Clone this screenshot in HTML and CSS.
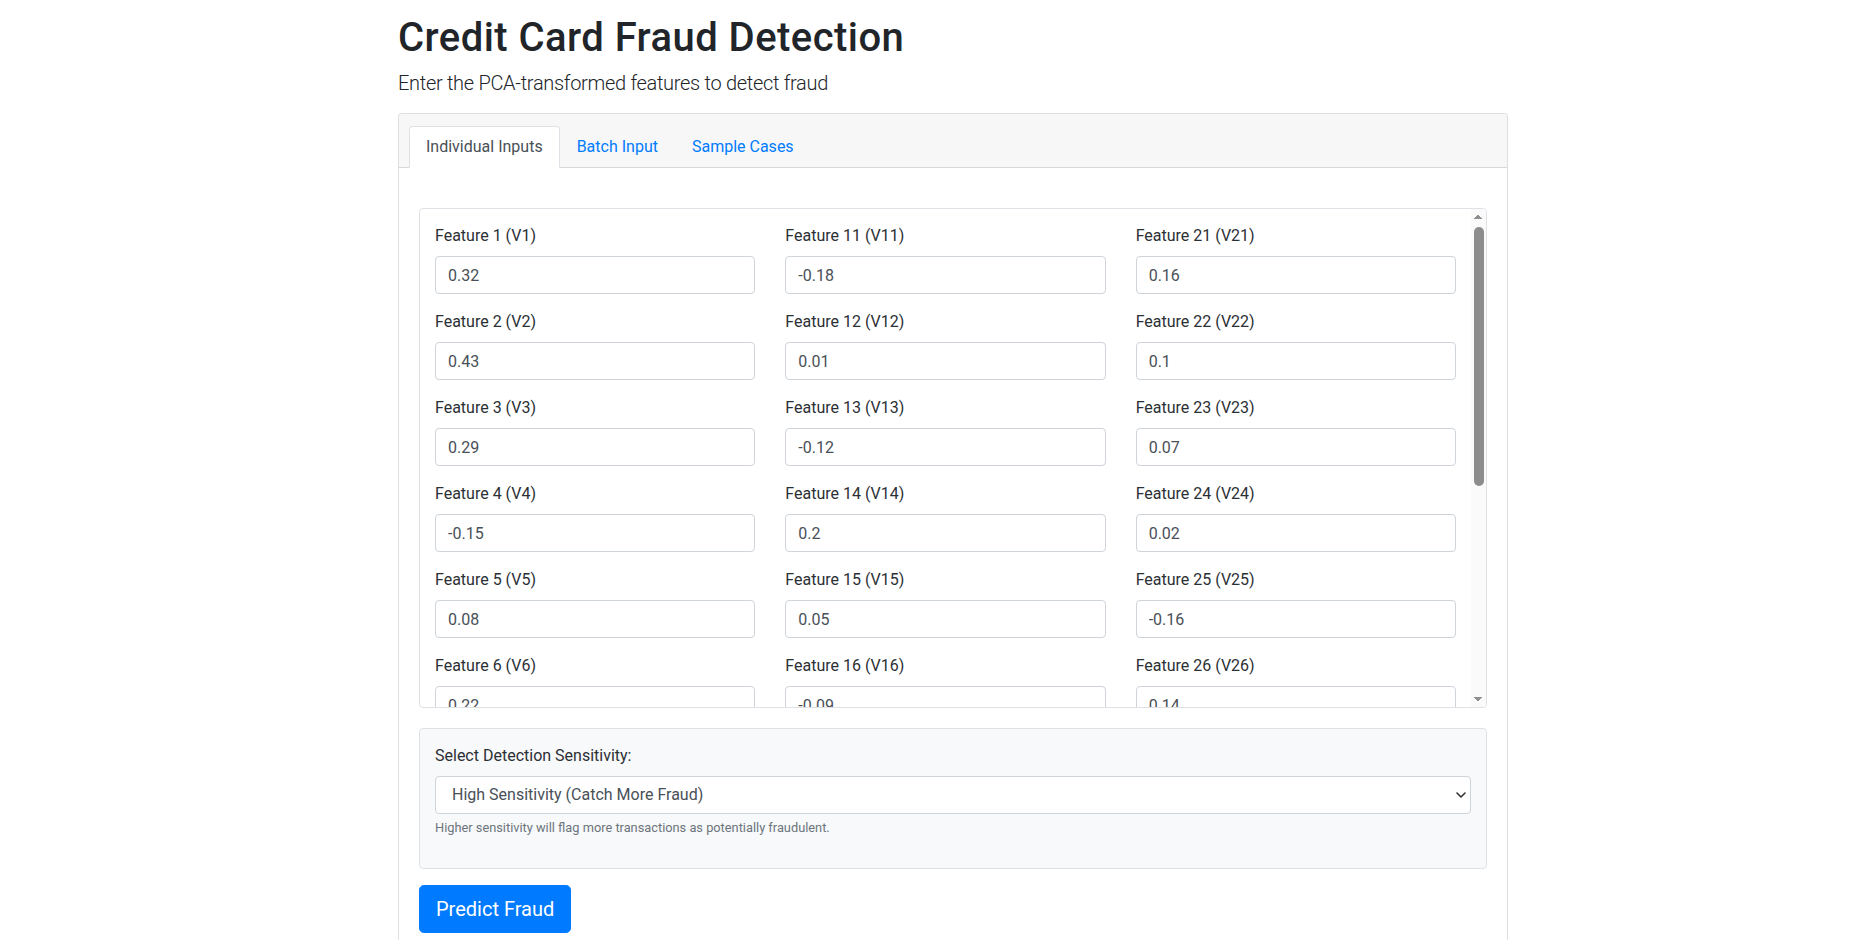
FILE: index.html
```html
<!DOCTYPE html>
<html lang="en">
<head>
<meta charset="utf-8">
<title>Credit Card Fraud Detection</title>
<link rel="stylesheet" href="styles.css">
</head>
<body>
<div class="page">
  <h1 class="title">Credit Card Fraud Detection</h1>
  <p class="lead">Enter the PCA-transformed features to detect fraud</p>

  <div class="card">
    <div class="card-header">
      <ul class="tabs">
        <li class="tab active">Individual Inputs</li>
        <li class="tab">Batch Input</li>
        <li class="tab">Sample Cases</li>
      </ul>
    </div>
    <div class="card-body">
      <div class="features-wrap">
        <div class="features">
          <div class="feature-cols">
            <div class="feature-col">
              <div class="field"><label>Feature 1 (V1)</label><input class="input" type="text" value="0.32"></div>
              <div class="field"><label>Feature 2 (V2)</label><input class="input" type="text" value="0.43"></div>
              <div class="field"><label>Feature 3 (V3)</label><input class="input" type="text" value="0.29"></div>
              <div class="field"><label>Feature 4 (V4)</label><input class="input" type="text" value="-0.15"></div>
              <div class="field"><label>Feature 5 (V5)</label><input class="input" type="text" value="0.08"></div>
              <div class="field"><label>Feature 6 (V6)</label><input class="input" type="text" value="0.22"></div>
              <div class="field"><label>Feature 7 (V7)</label><input class="input" type="text" value="0.11"></div>
              <div class="field"><label>Feature 8 (V8)</label><input class="input" type="text" value="-0.05"></div>
              <div class="field"><label>Feature 9 (V9)</label><input class="input" type="text" value="0.13"></div>
              <div class="field"><label>Feature 10 (V10)</label><input class="input" type="text" value="-0.07"></div>
            </div>
            <div class="feature-col">
              <div class="field"><label>Feature 11 (V11)</label><input class="input" type="text" value="-0.18"></div>
              <div class="field"><label>Feature 12 (V12)</label><input class="input" type="text" value="0.01"></div>
              <div class="field"><label>Feature 13 (V13)</label><input class="input" type="text" value="-0.12"></div>
              <div class="field"><label>Feature 14 (V14)</label><input class="input" type="text" value="0.2"></div>
              <div class="field"><label>Feature 15 (V15)</label><input class="input" type="text" value="0.05"></div>
              <div class="field"><label>Feature 16 (V16)</label><input class="input" type="text" value="-0.09"></div>
              <div class="field"><label>Feature 17 (V17)</label><input class="input" type="text" value="0.03"></div>
              <div class="field"><label>Feature 18 (V18)</label><input class="input" type="text" value="-0.11"></div>
              <div class="field"><label>Feature 19 (V19)</label><input class="input" type="text" value="0.06"></div>
              <div class="field"><label>Feature 20 (V20)</label><input class="input" type="text" value="0.04"></div>
            </div>
            <div class="feature-col">
              <div class="field"><label>Feature 21 (V21)</label><input class="input" type="text" value="0.16"></div>
              <div class="field"><label>Feature 22 (V22)</label><input class="input" type="text" value="0.1"></div>
              <div class="field"><label>Feature 23 (V23)</label><input class="input" type="text" value="0.07"></div>
              <div class="field"><label>Feature 24 (V24)</label><input class="input" type="text" value="0.02"></div>
              <div class="field"><label>Feature 25 (V25)</label><input class="input" type="text" value="-0.16"></div>
              <div class="field"><label>Feature 26 (V26)</label><input class="input" type="text" value="0.14"></div>
              <div class="field"><label>Feature 27 (V27)</label><input class="input" type="text" value="-0.03"></div>
              <div class="field"><label>Feature 28 (V28)</label><input class="input" type="text" value="0.01"></div>
            </div>
          </div>
        </div>
        <div class="fake-scrollbar" aria-hidden="true">
          <span class="sb-arrow sb-up"></span>
          <span class="sb-track"><span class="sb-thumb"></span></span>
          <span class="sb-arrow sb-down"></span>
        </div>
      </div>

      <div class="sensitivity">
        <label class="sens-label">Select Detection Sensitivity:</label>
        <div class="select-wrap">
          <select class="select">
            <option>High Sensitivity (Catch More Fraud)</option>
            <option>Balanced</option>
            <option>Low Sensitivity (Fewer False Alarms)</option>
          </select>
          <svg class="chevron" width="10" height="6" viewBox="0 0 10 6"><path d="M1 1 L5 5 L9 1" fill="none" stroke="#333" stroke-width="1.6" stroke-linecap="round" stroke-linejoin="round"/></svg>
        </div>
        <small class="hint">Higher sensitivity will flag more transactions as potentially fraudulent.</small>
      </div>

      <button class="btn-primary" type="button">Predict Fraud</button>
    </div>
  </div>
</div>
</body>
</html>
```

FILE: styles.css
```css
* { box-sizing: border-box; }

html, body {
  margin: 0;
  padding: 0;
  background: #fff;
}

body {
  font-family: Roboto, "Liberation Sans", Arial, sans-serif;
  font-size: 16px;
  line-height: 1.5;
  color: #212529;
  overflow: hidden;
}

.page {
  width: 1110px;
  margin: 0 0 0 398px;
  padding-top: 14px;
}

.title {
  margin: 0 0 6px;
  font-size: 40px;
  font-weight: 500;
  line-height: 1.2;
  letter-spacing: 0.45px;
  color: #212529;
}

.lead {
  margin: 0 0 15px;
  font-size: 20px;
  font-weight: 300;
  line-height: 1.5;
  letter-spacing: -0.3px;
  color: #212529;
}

.card {
  border: 1px solid rgba(0,0,0,.125);
  border-radius: 4px;
  background: #fff;
}

.card-header {
  background: #f7f7f7;
  border-bottom: 1px solid rgba(0,0,0,.125);
  padding: 12px 10px 0;
  border-radius: 3px 3px 0 0;
}

.tabs {
  display: flex;
  list-style: none;
  margin: 0 0 -1px;
  padding: 0;
}

.tab {
  padding: 8px 16px;
  border: 1px solid transparent;
  border-radius: 4px 4px 0 0;
  color: #007bff;
  line-height: 24px;
}

.tab.active {
  background: #fff;
  color: #495057;
  border-color: #dee2e6 #dee2e6 #fff;
}

.card-body {
  padding: 40px 20px 20px;
}

.features-wrap {
  position: relative;
}

.features {
  height: 500px;
  overflow-y: auto;
  scrollbar-width: none;
  border: 1px solid #dee2e6;
  border-radius: 4px;
  padding: 15px 30px 15px 15px;
}

.fake-scrollbar {
  position: absolute;
  top: 1px;
  right: 1px;
  bottom: 1px;
  width: 15px;
  background: #fafafa;
  display: flex;
  flex-direction: column;
  border-radius: 0 3px 3px 0;
}

.sb-arrow {
  display: block;
  height: 14px;
  flex: none;
  background-repeat: no-repeat;
  background-size: 8px 5px;
}

.sb-up {
  background-image: conic-gradient(from 141deg at 50% 0, #8f8f8f 78deg, transparent 78deg);
  background-position: 3px 5px;
}

.sb-down {
  background-image: conic-gradient(from -39deg at 50% 100%, #8f8f8f 78deg, transparent 78deg);
  background-position: 3px 4px;
}

.sb-track {
  flex: 1;
  display: block;
  padding: 4px 2px 0 3px;
}

.sb-thumb {
  display: block;
  height: 259px;
  background: #8c8c8c;
  border-radius: 5px;
}

.feature-cols {
  display: grid;
  grid-template-columns: repeat(3, 1fr);
  column-gap: 30px;
}

.field {
  margin-bottom: 16px;
}

.field label,
.sens-label {
  display: block;
  margin-bottom: 8px;
  line-height: 24px;
  font-size: 16px;
  color: #2b3035;
}

.input,
.select {
  display: block;
  width: 100%;
  height: 38px;
  padding: 6px 12px;
  font-family: inherit;
  font-size: 16px;
  line-height: 24px;
  color: #495057;
  background: #fff;
  border: 1px solid #ced4da;
  border-radius: 4px;
  outline: none;
}

.sensitivity {
  margin-top: 20px;
  padding: 15px 15px 31px;
  background: #f8f9fa;
  border: 1px solid #dee2e6;
  border-radius: 4px;
}

.select-wrap {
  position: relative;
}

.select {
  appearance: none;
  -webkit-appearance: none;
  padding-left: 16px;
}

.chevron {
  position: absolute;
  right: 5px;
  top: 16px;
  pointer-events: none;
}

.hint {
  display: block;
  margin-top: 4px;
  font-size: 12.8px;
  line-height: 19px;
  color: #6c757d;
}

.btn-primary {
  margin-top: 16px;
  display: inline-block;
  padding: 8px 16px;
  font-family: inherit;
  font-size: 20px;
  line-height: 30px;
  color: #fff;
  background: #007bff;
  border: 1px solid #007bff;
  border-radius: 4.8px;
  cursor: pointer;
}
```
